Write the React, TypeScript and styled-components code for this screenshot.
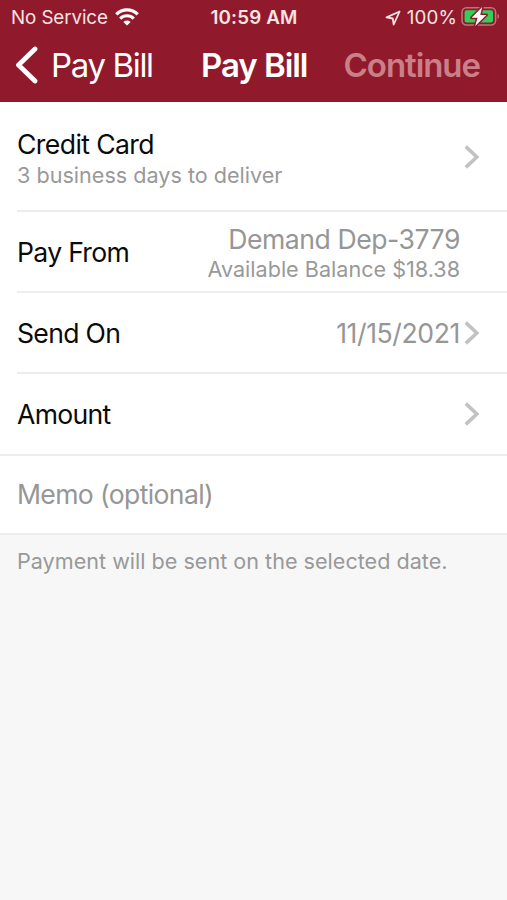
import React from "react";
import styled, { createGlobalStyle } from "styled-components";

const GlobalStyle = createGlobalStyle`
  * { box-sizing: border-box; }
  body {
    margin: 0;
    background: #f7f7f7;
    font-family: Inter, "Liberation Sans", sans-serif;
    -webkit-font-smoothing: antialiased;
  }
  button { border: 0; padding: 0; background: none; font: inherit; color: inherit; }
`;

const Screen = styled.div`
  display: flex;
  flex-direction: column;
  width: 507px;
  height: 900px;
  overflow: hidden;
  background: #f7f7f7;
`;

const Header = styled.header`
  flex: none;
  height: 102px;
  background: #901a2b;
  color: #fff;
`;

const StatusBar = styled.div`
  display: grid;
  grid-template-columns: 1fr auto 1fr;
  align-items: center;
  height: 34px;
  padding: 1px 7px 0 11px;
  font-size: 18.8px;
  line-height: 33px;
  white-space: nowrap;
  color: #fbe3e3;
`;

const StatusGroup = styled.div<{ $end?: boolean }>`
  display: flex;
  align-items: center;
  justify-content: ${(p) => (p.$end ? "flex-end" : "flex-start")};
`;

const Spaced = styled.span<{ $tracking: number }>`
  letter-spacing: ${(p) => p.$tracking}px;
`;

const Clock = styled.time`
  padding-right: 3px;
  font-weight: 600;
  letter-spacing: 0.15px;
`;

const NavBar = styled.nav`
  display: grid;
  grid-template-columns: 201px 1fr auto;
  align-items: center;
  height: 62px;
  padding-right: 26px;
  font-size: 33px;
  line-height: 62px;
  white-space: nowrap;
`;

const BackButton = styled.button`
  display: flex;
  align-items: center;
  gap: 13px;
  padding-left: 15px;
  letter-spacing: -1.35px;
`;

const Title = styled.h1`
  margin: 0;
  font-size: inherit;
  font-weight: 600;
  letter-spacing: -1.05px;
`;

const ContinueButton = styled.button`
  padding-right: 1px;
  font-weight: 600;
  letter-spacing: -1.05px;
  color: #cb7f89;
`;

const Form = styled.main`
  flex: none;
  background: #fff;
`;

const Row = styled.div<{ $height: number; $full?: boolean; $drop?: number }>`
  display: flex;
  align-items: center;
  height: ${(p) => p.$height}px;
  margin-left: ${(p) => (p.$full ? 0 : 17)}px;
  padding-left: ${(p) => (p.$full ? 17 : 0)}px;
  padding-right: 27px;
  padding-top: ${(p) => p.$drop ?? 0}px;
  border-bottom: 2px solid #ededed;
`;

const Label = styled.span<{ $tracking?: number }>`
  font-size: 26.6px;
  line-height: 32px;
  letter-spacing: ${(p) => p.$tracking ?? -0.7}px;
  white-space: nowrap;
  color: #0b0b0b;
`;

const Value = styled(Label)`
  color: #969696;
`;

const Detail = styled.span`
  font-size: 21.6px;
  line-height: 30px;
  white-space: nowrap;
  color: #999;
`;

const Stack = styled.div<{ $end?: boolean }>`
  display: flex;
  flex-direction: column;
  flex: 1;
  align-items: ${(p) => (p.$end ? "flex-end" : "flex-start")};
  padding-top: ${(p) => (p.$end ? 3 : 4)}px;
  padding-right: ${(p) => (p.$end ? 20 : 0)}px;

  ${Detail} {
    line-height: ${(p) => (p.$end ? 28 : 30)}px;
  }
`;

const Trailing = styled.div`
  display: flex;
  align-items: center;
  gap: 4px;
  margin-left: auto;
`;

const MemoInput = styled.input`
  width: 100%;
  border: 0;
  padding: 0 0 2px;
  outline: 0;
  background: none;
  font: 26.6px/32px Inter, "Liberation Sans", sans-serif;
  letter-spacing: -0.65px;
  &::placeholder { color: #969696; opacity: 1; }
`;

const Footnote = styled.p`
  margin: 0;
  padding: 11px 17px;
`;

const Chevron = () => (
  <svg width="16" height="24" viewBox="0 0 16 24" fill="none">
    <path d="M1.8 1.6 12.8 12 1.8 22.4" stroke="#c2c2c4" strokeWidth="3.6" />
  </svg>
);

const BackIcon = () => (
  <svg width="23" height="38" viewBox="0 0 23 38" fill="none">
    <path d="M20 3 3.5 19 20 35" stroke="#fff" strokeWidth="4.8" strokeLinecap="round" strokeLinejoin="round" />
  </svg>
);

const WifiIcon = styled((props: React.SVGProps<SVGSVGElement>) => (
  <svg width="24" height="18" viewBox="0 0 24 18" fill="none" {...props}>
    <path d="M1.3 6.4a15.1 15.1 0 0 1 21.4 0" stroke="#fff" strokeWidth="3.2" />
    <path d="M5.2 10.6a9.6 9.6 0 0 1 13.6 0" stroke="#fff" strokeWidth="3.1" />
    <path d="M12 17.6 8.4 13.9a5.1 5.1 0 0 1 7.2 0Z" fill="#fff" />
  </svg>
))`
  margin-left: 7px;
  margin-top: -2px;
`;

const LocationIcon = styled((props: React.SVGProps<SVGSVGElement>) => (
  <svg width="16" height="16" viewBox="0 0 16 16" fill="none" {...props}>
    <path d="M14.6 1.5 1.5 7.4 7.8 8.5 8.7 14.5Z" stroke="#fbe3e3" strokeWidth="1.8" strokeLinejoin="round" />
  </svg>
))`
  margin-right: 6px;
`;

const BatteryIcon = styled((props: React.SVGProps<SVGSVGElement>) => (
  <svg width="39" height="22" viewBox="0 0 39 22" fill="none" {...props}>
    <rect x="1" y="1.8" width="33.6" height="17.2" rx="4.5" stroke="#bd747d" strokeWidth="1.5" />
    <rect x="3.6" y="4.3" width="28.4" height="12.2" rx="2" fill="#30d158" />
    <path d="M36.5 7.8c2 .8 2 4.4 0 5.2Z" fill="#bd747d" />
    <path
      d="M21.2 .9 10.6 11.7h6L14.2 20 25.4 8.9h-6.2Z"
      fill="#fff"
      stroke="#901a2b"
      strokeWidth="3"
      strokeLinejoin="round"
      paintOrder="stroke"
    />
  </svg>
))`
  margin-left: 4px;
  margin-top: -1px;
`;

export default function App() {
  return (
    <Screen>
      <GlobalStyle />
      <Header>
        <StatusBar>
          <StatusGroup>
            <Spaced $tracking={-0.1}>No Service</Spaced>
            <WifiIcon />
          </StatusGroup>
          <Clock>10:59 AM</Clock>
          <StatusGroup $end>
            <LocationIcon />
            <Spaced $tracking={0.1}>100%</Spaced>
            <BatteryIcon />
          </StatusGroup>
        </StatusBar>
        <NavBar>
          <BackButton>
            <BackIcon />
            Pay Bill
          </BackButton>
          <Title>Pay Bill</Title>
          <ContinueButton disabled>Continue</ContinueButton>
        </NavBar>
      </Header>
      <Form>
        <Row $height={110} $drop={2}>
          <Stack>
            <Label $tracking={-0.6}>Credit Card</Label>
            <Detail>3 business days to deliver</Detail>
          </Stack>
          <Chevron />
        </Row>
        <Row $height={81}>
          <Label>Pay From</Label>
          <Stack $end>
            <Value $tracking={-0.45}>Demand Dep-3779</Value>
            <Detail>Available Balance $18.38</Detail>
          </Stack>
        </Row>
        <Row $height={81}>
          <Label>Send On</Label>
          <Trailing>
            <Value $tracking={-0.4}>11/15/2021</Value>
            <Chevron />
          </Trailing>
        </Row>
        <Row $height={82} $full>
          <Label>Amount</Label>
          <Trailing>
            <Chevron />
          </Trailing>
        </Row>
        <Row $height={79} $full>
          <MemoInput placeholder="Memo (optional)" aria-label="Memo" />
        </Row>
      </Form>
      <Footnote>
        <Detail>Payment will be sent on the selected date.</Detail>
      </Footnote>
    </Screen>
  );
}
